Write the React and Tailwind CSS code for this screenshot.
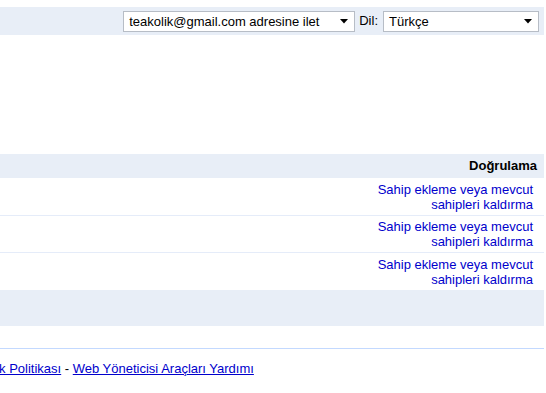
import React from 'react';

const Select = ({ value, className }) => (
  <div className={`flex items-center h-[21px] bg-white border border-[#b7bdc6] pl-[5px] pr-[6px] ${className}`}>
    <span className="flex-1 leading-none text-black">{value}</span>
    <svg width="8" height="5" viewBox="0 0 8 5" className="shrink-0">
      <path d="M0 0H8L4 4.5Z" fill="#000" />
    </svg>
  </div>
);

const OwnerRow = ({ last }) => (
  <div className={`h-[37px] flex items-center justify-end pr-[11px] ${last ? '' : 'border-b border-[#e5ecf9]'}`}>
    <a href="#" className="text-right leading-[15px] text-[#0000cc]">
      Sahip ekleme veya mevcut
      <br />
      sahipleri kaldırma
    </a>
  </div>
);

export default function App() {
  return (
    <div className="w-[544px] bg-white text-[13px] text-black font-['Liberation_Sans',Arial,sans-serif] overflow-hidden">
      {/* Top bar */}
      <div className="mt-[7px] h-[28px] bg-[#e8eef7] flex items-center justify-end pr-[5px]">
        <Select value="teakolik@gmail.com adresine ilet" className="w-[232px]" />
        <span className="ml-[4px] mr-[5px]">Dil:</span>
        <Select value="Türkçe" className="w-[156px]" />
      </div>

      <div className="h-[119px]" />

      {/* Owners table */}
      <div className="h-[24px] bg-[#e8eef7] flex items-center justify-end pr-[7px] font-bold">
        Doğrulama
      </div>
      <div className="pt-[1px]">
        <OwnerRow />
        <OwnerRow />
        <OwnerRow last />
      </div>
      <div className="h-[36px] bg-[#e8eef7]" />

      {/* Footer */}
      <div className="mt-[22px] border-t border-[#c3d9ff] pt-[12px]">
        <p className="ml-[-32px] whitespace-nowrap leading-[15px]">
          <a href="#" className="underline text-[#0000cc]">Gizlilik Politikası</a>
          {' - '}
          <a href="#" className="underline text-[#0000cc]">Web Yöneticisi Araçları Yardımı</a>
        </p>
      </div>
    </div>
  );
}
